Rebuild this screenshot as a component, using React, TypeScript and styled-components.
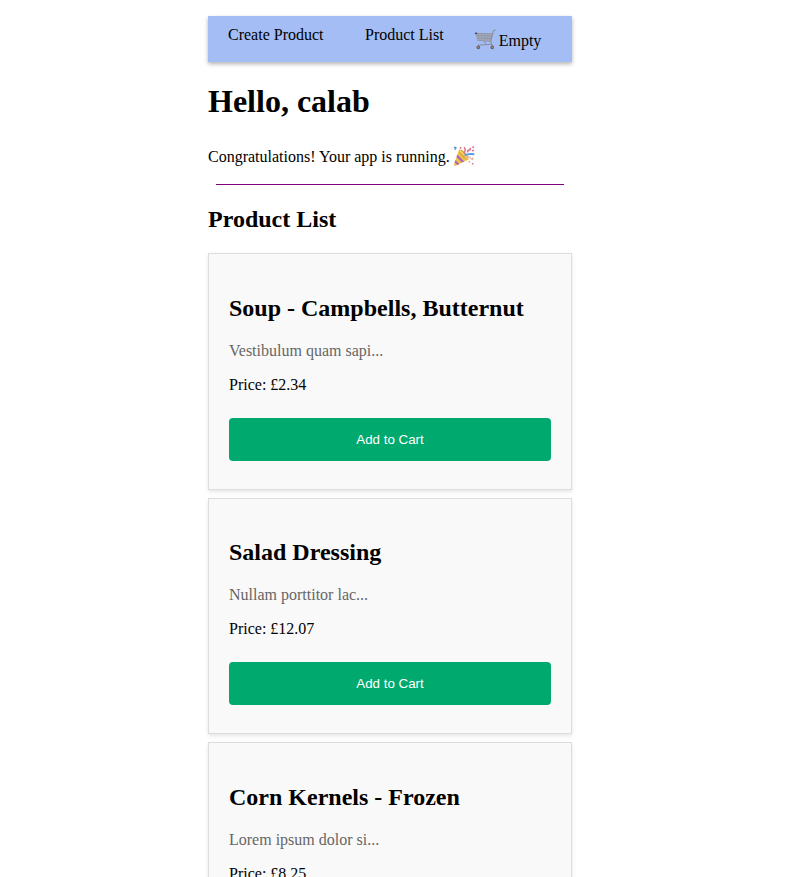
import React from "react";
import styled, { createGlobalStyle } from "styled-components";

const GlobalStyle = createGlobalStyle`
  html { overflow: hidden; }
  body {
    margin: 0;
    height: 877px;
    overflow: hidden;
    background: #fff;
    color: #000;
    font: 16px/18px "Liberation Serif", "Times New Roman", serif;
  }
`;

const Page = styled.main`
  width: 364px;
  margin-left: 208px;
  padding-top: 16px;
`;

const NavBar = styled.nav`
  display: flex;
  align-items: flex-start;
  height: 46px;
  box-sizing: border-box;
  padding: 10px 20px 0;
  background: #a4bdf4;
  box-shadow: 0 2px 4px rgba(0, 0, 0, 0.3);
`;

const NavLink = styled.a<{ $gap: number }>`
  margin-right: ${({ $gap }) => $gap}px;
  color: #000;
  white-space: nowrap;
`;

const CartStatus = styled.span`
  display: flex;
  gap: 2px;
  padding-top: 6px;
`;

const CartSvg = styled.svg`
  width: 23px;
  height: 22px;
  margin-top: -4px;
`;

const Title = styled.h1`
  margin: 21px 0 0;
  font-size: 32px;
  line-height: 37px;
`;

const Message = styled.p`
  display: flex;
  gap: 3px;
  height: 18px;
  margin: 28px 0 0;
`;

const PartySvg = styled.svg`
  width: 22px;
  height: 21px;
  margin-top: -2px;
`;

const Divider = styled.hr`
  height: 1px;
  margin: 18px 8px 0;
  border: 0;
  background: purple;
`;

const Subtitle = styled.h2`
  margin: 20px 0;
  font-size: 24px;
  line-height: 28px;
`;

const ProductCard = styled.article`
  box-sizing: border-box;
  height: 236.5px;
  margin-bottom: 8px;
  padding: 39.8px 20px 0;
  border: 1px solid #ddd;
  background: #f9f9f9;
  box-shadow: 0 2px 4px rgba(0, 0, 0, 0.1);
`;

const ProductName = styled.h2`
  margin: 0 0 20px;
  font-size: 24px;
  line-height: 28px;
`;

const Description = styled.p`
  margin: 0 0 16px;
  color: #666;
`;

const Price = styled.p`
  margin: 0 0 24px;
`;

const AddButton = styled.button`
  display: block;
  width: 100%;
  height: 43px;
  padding: 0;
  border: 0;
  border-radius: 4px;
  background: #00a96e;
  color: #fff;
  font: 13.333px "Liberation Sans", Arial, sans-serif;
`;

const products = [
  { name: "Soup - Campbells, Butternut", description: "Vestibulum quam sapi...", price: "2.34" },
  { name: "Salad Dressing", description: "Nullam porttitor lac...", price: "12.07" },
  { name: "Corn Kernels - Frozen", description: "Lorem ipsum dolor si...", price: "8.25" },
];

const CartIcon = () => (
  <CartSvg viewBox="0 0 23 22" fill="none" aria-hidden="true">
    <path d="M1.5 5 18.8 5.5 17 13.6 3 12.2Z" fill="#a5abbc" />
    <path d="M1.5 5.4 18.6 5.7M2 7.6 18.1 8.1M2.5 9.9 17.6 10.6M3 12.2 17 13.5" stroke="#858c9f" strokeWidth=".7" />
    <path d="M4.3 5.2 5.4 12.2M7.3 5.2 8.2 12.5M10.3 5.4 10.8 12.8M13.2 5.4 13.2 13M15.8 5.4 15.4 13" stroke="#9298a8" strokeWidth=".6" />
    <path d="M21.4 1.6 19.4 3 16.8 13.2 17.5 16.2 19.2 18" stroke="#8d8f98" strokeWidth="1.1" />
    <path d="M10 13.2 12 16.4M17.5 16.4 4 17.1" stroke="#8a8c98" strokeWidth="1" />
    <path d="M.9 5.4h2.3" stroke="#42465c" strokeWidth="1.5" />
    <circle cx="4.3" cy="19.4" r="1.8" fill="#67616b" />
    <circle cx="18.2" cy="19.4" r="1.8" fill="#67616b" />
    <circle cx="4.3" cy="19.4" r=".7" fill="#b28e79" />
    <circle cx="18.2" cy="19.4" r=".7" fill="#b28e79" />
  </CartSvg>
);

const PartyIcon = () => (
  <PartySvg viewBox="0 0 22 21" fill="none" aria-hidden="true">
    <path d="M6.2 3.5 1 18.6Q1 20.4 2.8 19.7L15.5 13.5Z" fill="#f0bf48" />
    <path d="m4.3 8.5 6.8 7-2 1-5.6-5.6Zm-2 5.8 4 3.7-2 .9-2.8-2.7Z" fill="#a864bd" />
    <ellipse cx="10.8" cy="8.6" rx="2.4" ry="6.5" transform="rotate(-43 10.8 8.6)" fill="#dda13b" />
    <path d="m6.8 4.5 7.8 8.2" stroke="#fbdc62" strokeWidth="1.5" />
    <path d="M10.6 7.4Q13.4 5 11.2 1.2" stroke="#df7893" strokeWidth="1.5" />
    <path d="M11.5 9.5Q15 7.5 21.3 8.3" stroke="#559de5" strokeWidth="1.9" />
    <path d="M13 11.5q3-1.5 4.5.5t2.2 1.5" stroke="#edb4a8" strokeWidth="1.2" />
    <path d="m14.5 6.4.6-2.2 2-.3.3-2.1" stroke="#df6880" strokeWidth="1.5" />
    <path d="m1 1.2 1.8.6-.8 2" stroke="#5793d8" strokeWidth="1.5" />
    <path d="m7 1.3 1.2 1m11.2-.7 1.6-.9m-1.8 4.3 1.6-.8" stroke="#dc6680" strokeWidth="1.5" />
    <path d="m15.8 15.2 1.2 1.1m2-4 1.5.8" stroke="#e4a16f" strokeWidth="1.3" />
    <path d="m19 18.2 1.3-1" stroke="#ca6991" strokeWidth="1.3" />
  </PartySvg>
);

export default function App() {
  return (
    <>
      <GlobalStyle />
      <Page>
        <NavBar>
          <NavLink $gap={41.5}>Create Product</NavLink>
          <NavLink $gap={30}>Product List</NavLink>
          <CartStatus><CartIcon />Empty</CartStatus>
        </NavBar>
        <Title>Hello, calab</Title>
        <Message>Congratulations! Your app is running.<PartyIcon /></Message>
        <Divider />
        <Subtitle>Product List</Subtitle>
        {products.map((product) => (
          <ProductCard key={product.name}>
            <ProductName>{product.name}</ProductName>
            <Description>{product.description}</Description>
            <Price>Price: £{product.price}</Price>
            <AddButton>Add to Cart</AddButton>
          </ProductCard>
        ))}
      </Page>
    </>
  );
}
